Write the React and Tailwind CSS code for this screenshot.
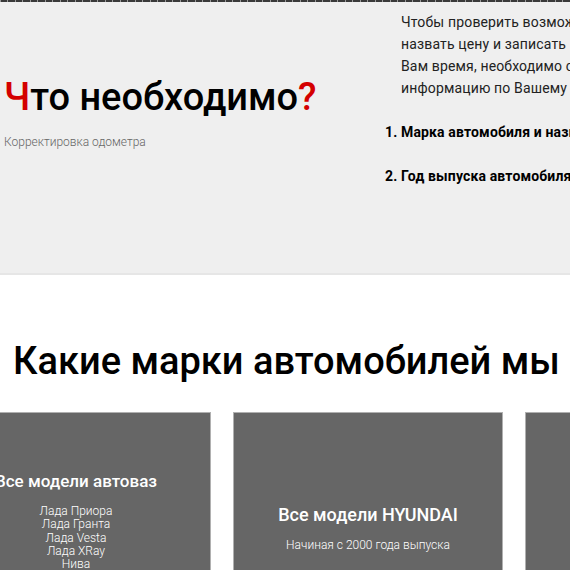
const models = ["Лада Приора", "Лада Гранта", "Лада Vesta", "Лада XRay", "Нива"];

const App = () => {
  return (
    <div
      className="w-[570px] h-[570px] overflow-hidden bg-white"
      style={{ fontFamily: "Roboto, 'Liberation Sans', sans-serif" }}
    >
      <div className="h-[2px] bg-[repeating-linear-gradient(90deg,#9a9a9a_0_1px,#3a3a3a_1px_7.5px)]" />
      <section className="h-[273px] bg-[#efefef] border-b-2 border-[#e6e6e6] flex">
        <div className="w-[385px] shrink-0 pl-[4px] pt-[72px]">
          <h1 className="text-[38px] leading-[46px] font-medium text-black whitespace-nowrap">
            <span className="text-[#d40000]">Ч</span>то необходимо
            <span className="text-[#d40000]">?</span>
          </h1>
          <p className="mt-[14px] text-[12px] leading-[16px] text-[#666] font-light">
            Корректировка одометра
          </p>
        </div>
        <div className="pt-[9px] text-[14px] leading-[22px] whitespace-nowrap tracking-[0.15px]">
          <p className="pl-[16px] text-[#222]">
            Чтобы проверить возможность сделать работу,
            <br />
            назвать цену и записать Вас на удобное
            <br />
            Вам время, необходимо сообщить следующую
            <br />
            информацию по Вашему автомобилю:
          </p>
          <div className="mt-[22px] flex font-bold text-black">
            <span className="w-[16px]">1.</span>
            <span>Марка автомобиля и название модели</span>
          </div>
          <div className="mt-[22px] flex font-bold text-black">
            <span className="w-[16px]">2.</span>
            <span>Год выпуска автомобиля</span>
          </div>
        </div>
      </section>
      <section className="pt-[64px]">
        <h2 className="pl-[13px] text-[38px] leading-[44px] font-medium text-black whitespace-nowrap">
          Какие марки автомобилей мы обслуживаем?
        </h2>
        <div className="mt-[29px] ml-[-59px] flex gap-[22px]">
          <div className="w-[270px] h-[230px] shrink-0 bg-[#666] border border-[#b0b0b0] flex flex-col items-center text-white pt-[57px]">
            <h3 className="text-[17px] leading-[22px] font-medium">Все модели автоваз</h3>
            <ul className="mt-[13px] text-[12px] leading-[13.3px] font-light text-center">
              {models.map((m) => (
                <li key={m}>{m}</li>
              ))}
            </ul>
          </div>
          <div className="w-[270px] h-[230px] shrink-0 bg-[#666] border border-[#b0b0b0] flex flex-col items-center text-white pt-[91px]">
            <h3 className="text-[18px] leading-[22px] font-medium">Все модели HYUNDAI</h3>
            <p className="mt-[11px] text-[12px] leading-[16px] font-light">
              Начиная с 2000 года выпуска
            </p>
          </div>
          <div className="w-[270px] h-[230px] shrink-0 bg-[#666] border border-[#b0b0b0]" />
        </div>
      </section>
    </div>
  );
};

export default App;
